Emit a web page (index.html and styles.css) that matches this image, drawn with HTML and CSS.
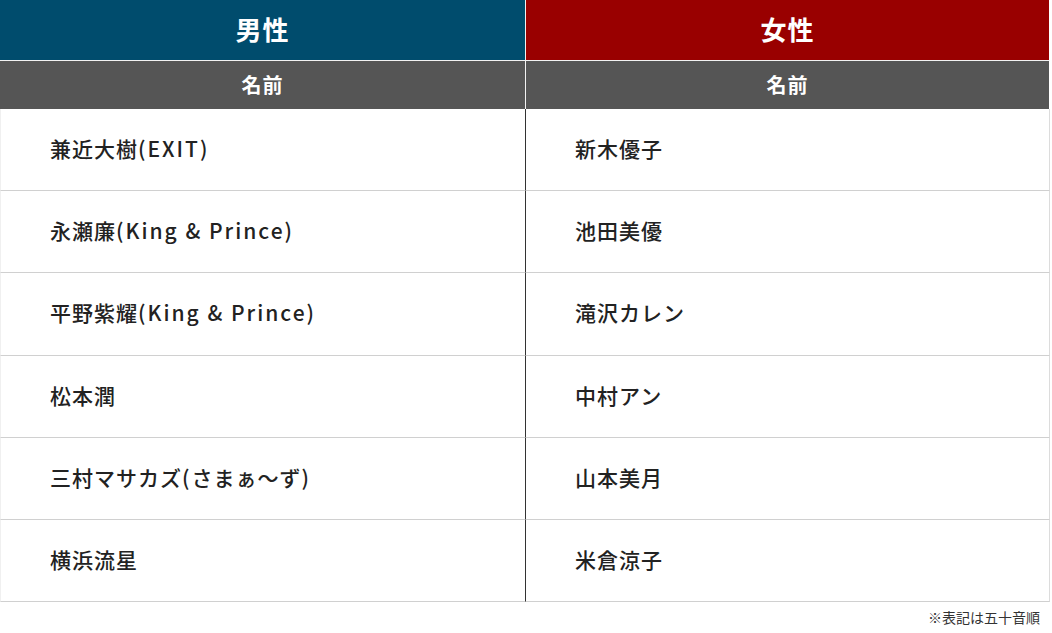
FILE: index.html
```html
<!DOCTYPE html>
<html lang="ja">
<head>
<meta charset="utf-8">
<title>男性・女性</title>
<link rel="stylesheet" href="styles.css">
</head>
<body>
<div class="page">
  <div class="grid">
    <div class="h1 male">男性</div>
    <div class="h1 female col-r">女性</div>
    <div class="h2">名前</div>
    <div class="h2 col-r">名前</div>

    <div class="cell col-l">兼近大樹<span class="en">(EXIT)</span></div>
    <div class="cell col-r">新木優子</div>
    <div class="cell col-l">永瀬廉<span class="en">(King &amp; Prince)</span></div>
    <div class="cell col-r">池田美優</div>
    <div class="cell col-l tall">平野紫耀<span class="en">(King &amp; Prince)</span></div>
    <div class="cell col-r tall">滝沢カレン</div>
    <div class="cell col-l">松本潤</div>
    <div class="cell col-r">中村アン</div>
    <div class="cell col-l">三村マサカズ<span class="en">(</span>さまぁ〜ず<span class="en">)</span></div>
    <div class="cell col-r">山本美月</div>
    <div class="cell col-l">横浜流星</div>
    <div class="cell col-r">米倉涼子</div>
  </div>
  <p class="note">※表記は五十音順</p>
</div>
</body>
</html>
```
FILE: styles.css
```css
html, body {
  margin: 0;
  padding: 0;
  background: #fff;
}
body {
  font-family: "Noto Sans CJK JP", "Noto Sans", sans-serif;
  color: #222;
}
.page {
  width: 1050px;
}
.grid {
  display: grid;
  grid-template-columns: 525px 525px;
}
.grid > div {
  box-sizing: border-box;
}
.h1 {
  height: 61px;
  padding-bottom: 3px;
  border-bottom: 1px solid #f2f2f2;
  color: #fff;
  font-size: 26px;
  font-weight: 700;
  display: flex;
  align-items: center;
  justify-content: center;
  letter-spacing: 1px;
}
.male {
  background: #004c6d;
}
.female {
  background: #990000;
}
.h2 {
  height: 48px;
  padding-bottom: 2px;
  background: #555555;
  color: #fff;
  font-size: 20px;
  font-weight: 700;
  display: flex;
  align-items: center;
  justify-content: center;
  letter-spacing: 1px;
}
.col-r {
  border-left: 1px solid #f2f2f2;
}
.h1.col-r, .h2.col-r {
  border-right: 1px solid #fff;
}
.cell {
  height: 82px;
  padding-bottom: 4px;
  border-bottom: 1px solid #d0d0d0;
  display: flex;
  align-items: center;
  font-size: 21px;
  font-weight: 500;
  letter-spacing: 1px;
  white-space: pre;
}
.en {
  letter-spacing: 2px;
}
.cell.tall {
  height: 83px;
}
.cell.col-l {
  padding-left: 49px;
  border-left: 1px solid #f0f0f0;
}
.cell.col-r {
  padding-left: 49px;
  border-left: 1px solid #333;
  border-right: 1px solid #dcdcdc;
}
.note {
  margin: 0;
  padding: 5px 10px 0 0;
  text-align: right;
  font-size: 14px;
  color: #333;
}
```
